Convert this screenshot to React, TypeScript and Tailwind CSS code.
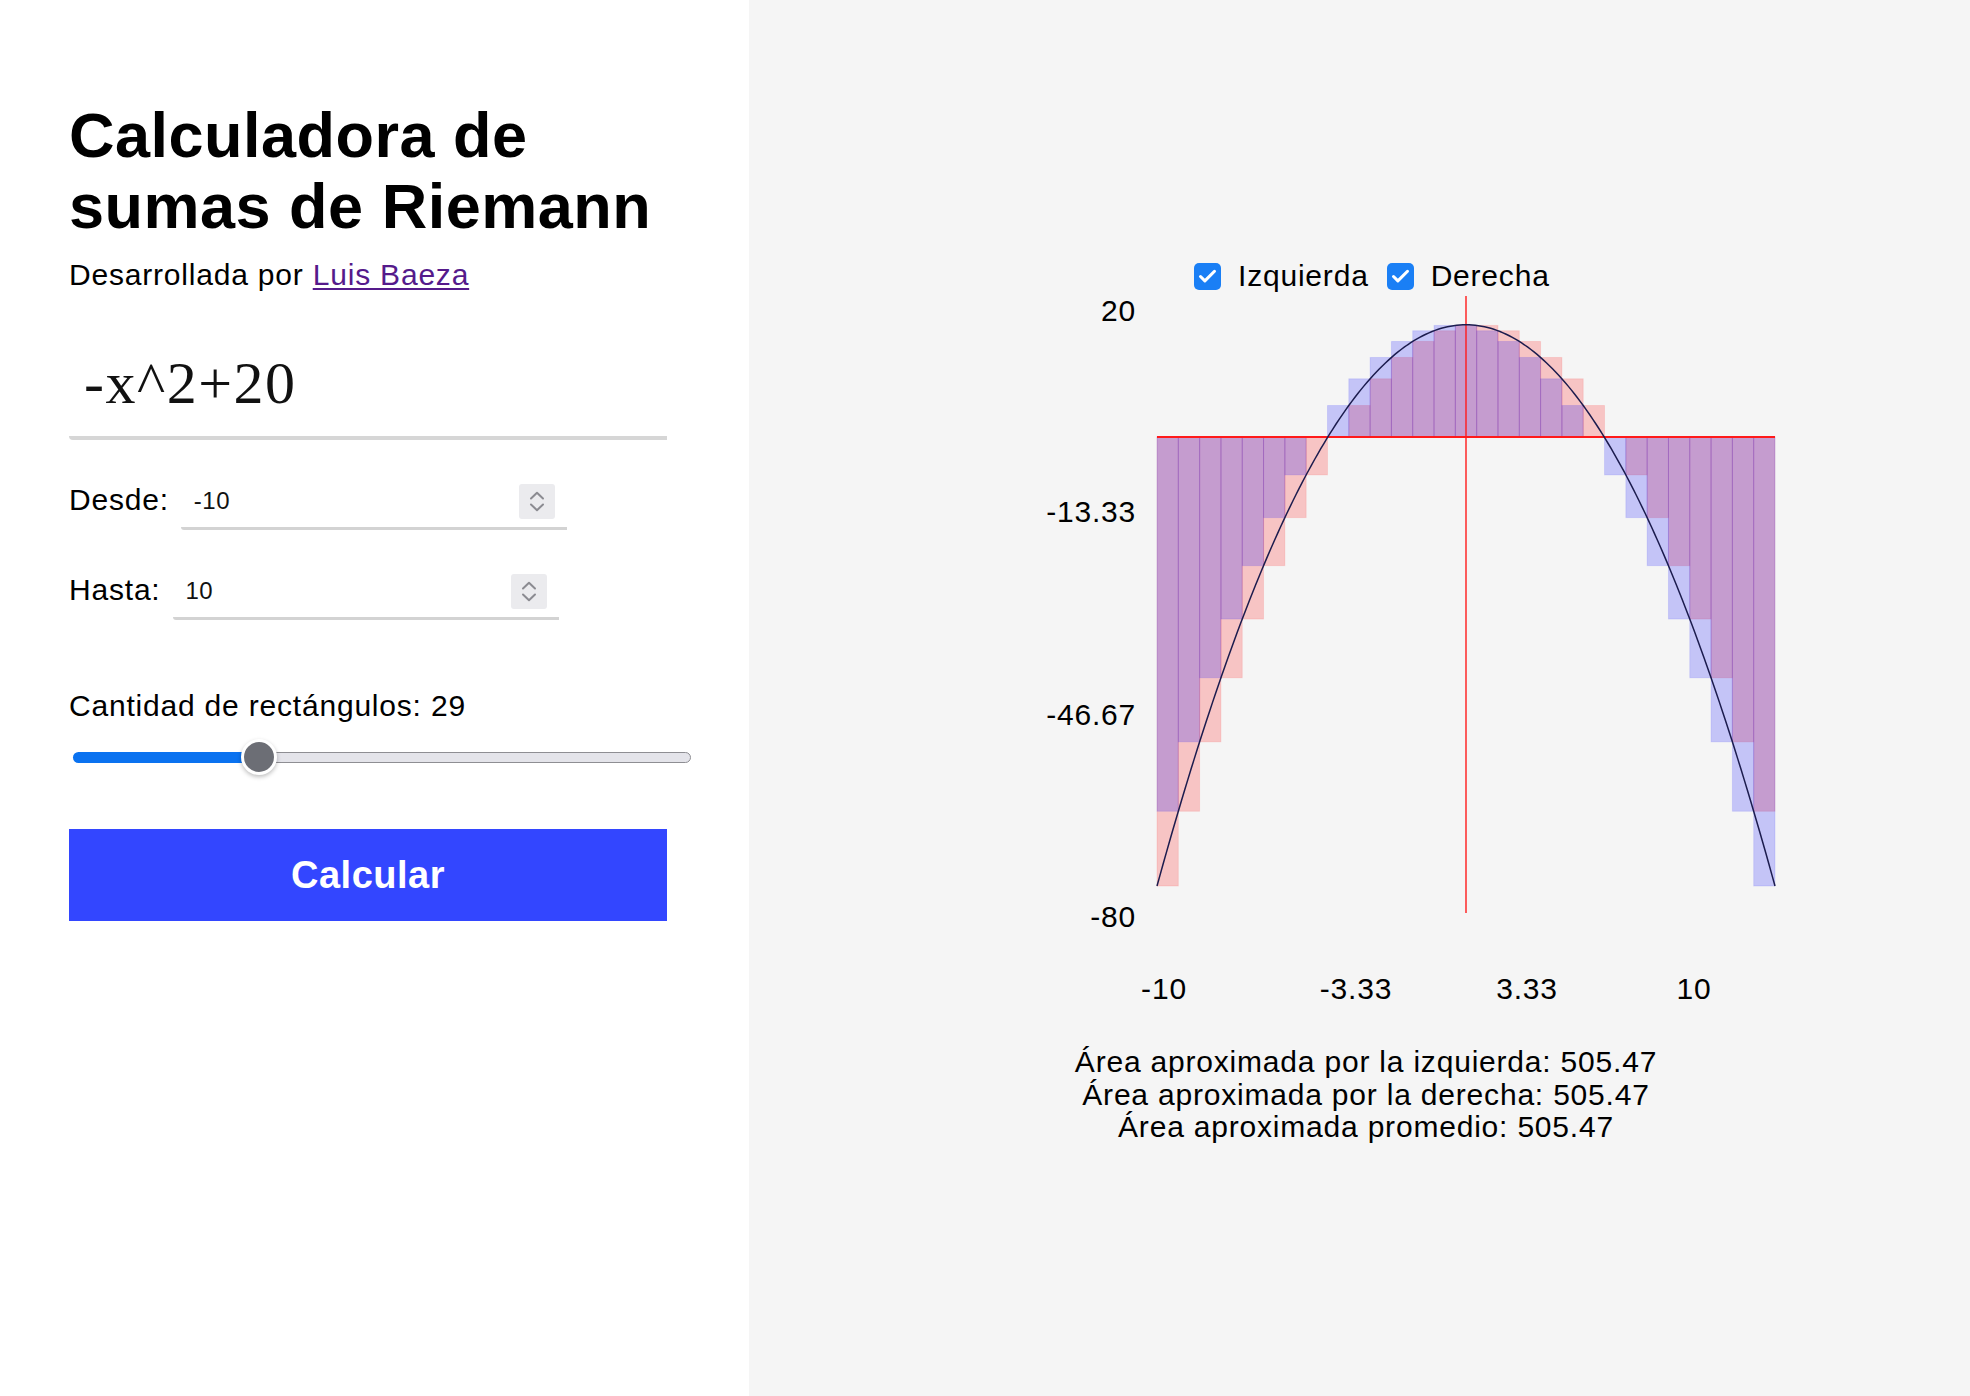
import { Check } from "lucide-react";

const f = (x: number) => -x * x + 20;
const N = 29;

// plot geometry (page pixels)
const X0 = 1157;
const X1 = 1775;
const Y0 = 437;
const SY = 449 / 80;
const px = (x: number) => X0 + ((x + 10) / 20) * (X1 - X0);
const py = (y: number) => Y0 - y * SY;

const font = "'Liberation Sans', Arial, sans-serif";

function Bars({ side }: { side: "left" | "right" }) {
  const dx = 20 / N;
  const w = (X1 - X0) / N;
  const fill = side === "left" ? "rgba(255,0,0,0.2)" : "rgba(0,0,255,0.2)";
  const stroke = side === "left" ? "rgba(255,0,0,0.1)" : "rgba(0,0,255,0.1)";
  return (
    <g>
      {Array.from({ length: N }).map((_, i) => {
        const a = -10 + i * dx;
        const y = f(side === "left" ? a : a + dx);
        const top = Math.min(py(y), Y0);
        const h = Math.abs(py(y) - Y0);
        return (
          <rect
            key={i}
            x={px(a)}
            y={top}
            width={w}
            height={h}
            fill={fill}
            stroke={stroke}
            strokeWidth={1}
          />
        );
      })}
    </g>
  );
}

function Chart() {
  const pts = Array.from({ length: 201 }).map((_, k) => {
    const x = -10 + (k / 200) * 20;
    return `${k === 0 ? "M" : "L"}${px(x).toFixed(2)} ${py(f(x)).toFixed(2)}`;
  });

  const yLabels: [string, number][] = [
    ["20", 321],
    ["-13.33", 522],
    ["-46.67", 725],
    ["-80", 927],
  ];
  const xLabels: [string, number][] = [
    ["-10", 1164],
    ["-3.33", 1356],
    ["3.33", 1527],
    ["10", 1694],
  ];

  return (
    <svg
      width={760}
      height={716}
      viewBox="1040 294 760 716"
      className="block"
    >
      <Bars side="left" />
      <Bars side="right" />

      {/* axes */}
      <line x1={X0} y1={Y0} x2={X1} y2={Y0} stroke="#ff1a1a" strokeWidth={2} />
      <line x1={px(0)} y1={296} x2={px(0)} y2={913} stroke="#ff1a1a" strokeWidth={1.4} />

      {/* curve */}
      <path d={pts.join(" ")} fill="none" stroke="#1c1c4e" strokeWidth={1.5} />

      {yLabels.map(([t, y]) => (
        <text
          key={t}
          x={1136}
          y={y}
          textAnchor="end"
          fontSize={30}
          letterSpacing={0.8}
          fontFamily={font}
          fill="#000"
        >
          {t}
        </text>
      ))}
      {xLabels.map(([t, x]) => (
        <text
          key={t}
          x={x}
          y={999}
          textAnchor="middle"
          fontSize={30}
          letterSpacing={0.8}
          fontFamily={font}
          fill="#000"
        >
          {t}
        </text>
      ))}
    </svg>
  );
}

function Spinner() {
  return (
    <div className="w-[36px] h-[35px] bg-[#ebebee] rounded-[3px] flex flex-col items-center justify-center gap-[3px]">
      <svg width="16" height="9" viewBox="0 0 16 9">
        <path d="M2 7.5 L8 1.8 L14 7.5" fill="none" stroke="#8b8b91" strokeWidth="2" strokeLinecap="round" strokeLinejoin="round" />
      </svg>
      <svg width="16" height="9" viewBox="0 0 16 9">
        <path d="M2 1.5 L8 7.2 L14 1.5" fill="none" stroke="#8b8b91" strokeWidth="2" strokeLinecap="round" strokeLinejoin="round" />
      </svg>
    </div>
  );
}

function NumberField({ label, value }: { label: string; value: string }) {
  return (
    <div className="flex items-center gap-[12px]">
      <span className="text-[30px] leading-[36px] tracking-[0.8px] pb-[5px]">{label}</span>
      <div className="w-[386px] h-[55px] border-b-[3px] border-[#d3d3d3] rounded-bl-[3px] flex items-center justify-between pl-[13px] pr-[12px]">
        <span className="text-[24px] leading-[28px] tracking-[0.5px] text-[#111]">{value}</span>
        <Spinner />
      </div>
    </div>
  );
}

function Legend({ label }: { label: string }) {
  return (
    <div className="flex items-center gap-[17px]">
      <div className="w-[27px] h-[27px] rounded-[5px] bg-[#1a7ff5] flex items-center justify-center">
        <Check size={21} color="#fff" strokeWidth={3.5} />
      </div>
      <span className="text-[30px] leading-[36px] tracking-[0.8px]">{label}</span>
    </div>
  );
}

export default function App() {
  return (
    <div
      className="flex w-[1970px] min-h-[1396px] text-black"
      style={{ fontFamily: font }}
    >
      {/* LEFT PANEL */}
      <div className="w-[749px] shrink-0 bg-white pl-[69px] pt-[100px]">
        <h1 className="text-[63px] leading-[71px] font-bold tracking-[0.5px]">
          Calculadora de
          <br />
          sumas de Riemann
        </h1>
        <p className="mt-[15px] text-[30px] leading-[36px] tracking-[0.8px]">
          Desarrollada por{" "}
          <a href="#" className="text-[#551a8b] underline underline-offset-[3px] decoration-[2px]">
            Luis Baeza
          </a>
        </p>

        {/* FUNCTION */}
        <div
          className="mt-[54px] w-[598px] border-b-4 border-[#d6d6d6] rounded-bl-[4px] pl-[15px] pb-[17px] text-[60px] leading-[72px] tracking-[1.5px] text-[#111]"
          style={{ fontFamily: "'Liberation Serif', 'Times New Roman', serif" }}
        >
          -x^2+20
        </div>

        <div className="mt-[35px]">
          <NumberField label="Desde:" value="-10" />
        </div>
        <div className="mt-[35px]">
          <NumberField label="Hasta:" value="10" />
        </div>

        <p className="mt-[68px] text-[30px] leading-[36px] tracking-[0.8px]">
          Cantidad de rectángulos: 29
        </p>

        {/* SLIDER */}
        <div className="relative mt-[14px] ml-[4px] w-[618px] h-[38px] flex items-center">
          <div className="w-[186px] h-[11px] bg-[#0a72f0] rounded-l-full" />
          <div className="flex-1 h-[11px] bg-[#e4e4ea] border-[1.5px] border-[#8e8e93] rounded-r-full" />
          <div className="absolute left-[168px] top-[1px] w-[36px] h-[36px] rounded-full bg-[#6c6e75] border-[3px] border-white shadow-[0_2px_4px_rgba(0,0,0,0.25)]" />
        </div>

        <button className="mt-[53px] w-[598px] h-[92px] bg-[#3346ff] text-white text-[38px] font-bold tracking-[0.5px] flex items-center justify-center">
          Calcular
        </button>
      </div>

      {/* RIGHT PANEL */}
      <div className="flex-1 bg-[#f5f5f5] pt-[258px] pl-[291px]">
        <div className="w-[760px]">
          <div className="h-[36px] ml-[154px] flex items-center gap-[18px]">
            <Legend label="Izquierda" />
            <Legend label="Derecha" />
          </div>

          <Chart />

          <div className="mt-[36px] w-[652px] text-center text-[30px] leading-[32.5px] tracking-[0.8px]">
            <p>Área aproximada por la izquierda: 505.47</p>
            <p>Área aproximada por la derecha: 505.47</p>
            <p>Área aproximada promedio: 505.47</p>
          </div>
        </div>
      </div>
    </div>
  );
}
